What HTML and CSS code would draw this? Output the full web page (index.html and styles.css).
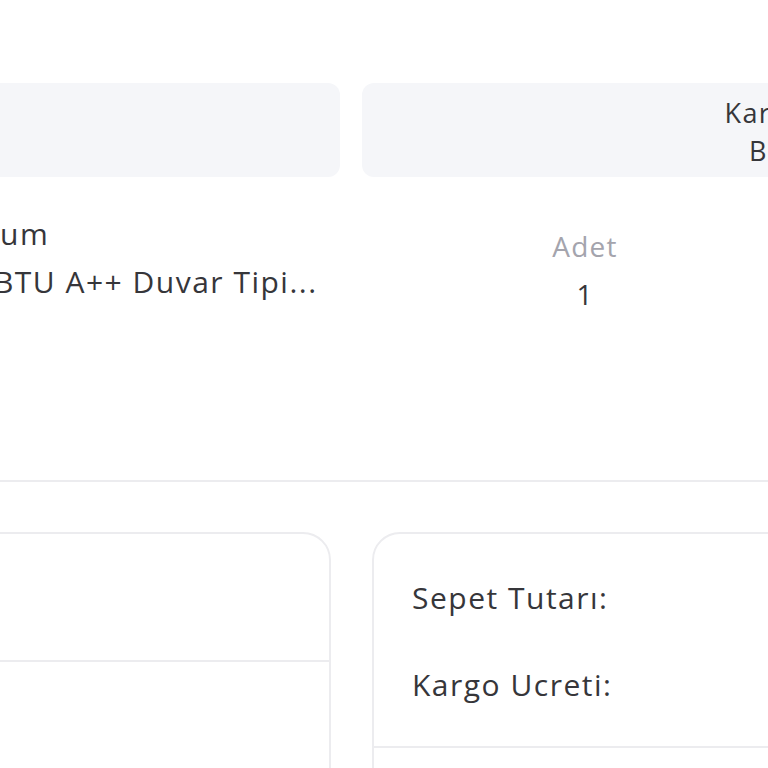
FILE: index.html
```html
<!DOCTYPE html>
<html lang="tr">
<head>
<meta charset="utf-8">
<title>Sipariş Detayı</title>
<link rel="stylesheet" href="styles.css">
</head>
<body>
<div class="page">
  <div class="summary-row">
    <div class="summary-box"></div>
    <div class="summary-box summary-box--info">
      <div class="summary-cell">
        <div class="summary-line">Kargo Firması</div>
        <div class="summary-line">Bilinmiyor</div>
      </div>
    </div>
  </div>

  <div class="item-section">
    <div class="item-row">
      <div class="item-name">
        <div class="item-line">Premium</div>
        <div class="item-line">9000 BTU A++ Duvar Tipi...</div>
      </div>
      <div class="item-qty">
        <div class="qty-label">Adet</div>
        <div class="qty-value">1</div>
      </div>
    </div>
  </div>

  <div class="cards">
    <div class="card card--left">
      <div class="card-top"></div>
      <div class="card-bottom"></div>
    </div>
    <div class="card card--right">
      <div class="totals">
        <div class="total-row">Sepet Tutarı:</div>
        <div class="total-row">Kargo Ucreti:</div>
      </div>
      <div class="card-footer"></div>
    </div>
  </div>
</div>
</body>
</html>
```

FILE: styles.css
```css
html, body {
  margin: 0;
  padding: 0;
  background: #ffffff;
}

body {
  font-family: "Open Sans", "Noto Sans", sans-serif;
  color: #36363a;
  overflow: hidden;
}

.page {
  width: 768px;
  height: 768px;
  overflow: hidden;
}

.summary-row {
  display: flex;
  gap: 22px;
  margin-top: 83px;
  margin-left: -560px;
}

.summary-box {
  flex: 0 0 900px;
  height: 94px;
  background: #f5f6f9;
  border-radius: 12px;
  box-sizing: border-box;
}

.summary-box--info {
  flex: 0 0 914px;
  display: flex;
  justify-content: center;
  align-items: center;
  padding-top: 4px;
}

.summary-cell {
  text-align: center;
  font-size: 27px;
  line-height: 38px;
  letter-spacing: 1.3px;
  color: #36363a;
}

.item-section {
  padding: 33px 0 164px;
  border-bottom: 2px solid #ececef;
}

.item-row {
  display: flex;
  align-items: flex-start;
  margin-left: -90px;
}

.item-name {
  flex: 0 0 615px;
  font-size: 30px;
  line-height: 48px;
  letter-spacing: 1.5px;
  white-space: nowrap;
  color: #36363a;
}

.item-qty {
  flex: 0 0 120px;
  padding-top: 15px;
  text-align: center;
  font-size: 28px;
  line-height: 43px;
  letter-spacing: 1.2px;
}

.qty-label {
  color: #a4a4ad;
}

.qty-value {
  margin-top: 5px;
  color: #36363a;
}

.cards {
  display: flex;
  gap: 41px;
  margin-top: 50px;
  margin-left: -369px;
}

.card {
  flex: 0 0 700px;
  height: 400px;
  border: 2px solid #ececef;
  border-radius: 28px;
  box-sizing: border-box;
}

.card-top {
  height: 126px;
  border-bottom: 2px solid #ececef;
}

.totals {
  display: flex;
  flex-direction: column;
  gap: 47px;
  padding: 44px 0 41px 38px;
}

.total-row {
  font-size: 30px;
  line-height: 40px;
  letter-spacing: 1.5px;
  color: #36363a;
}

.card-footer {
  border-top: 2px solid #ececef;
  height: 80px;
}
```
